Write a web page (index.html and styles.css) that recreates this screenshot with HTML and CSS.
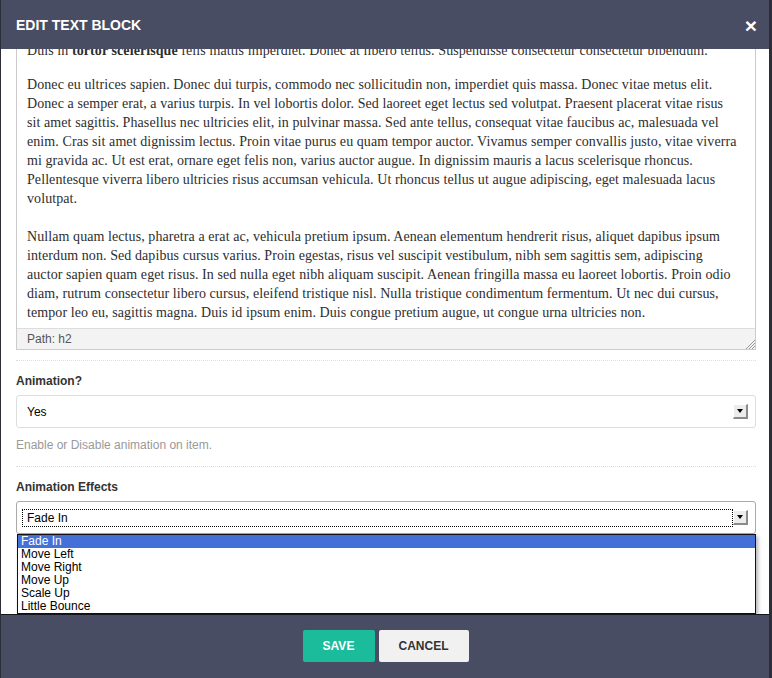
FILE: index.html
```html
<!DOCTYPE html>
<html>
<head>
<meta charset="utf-8">
<link rel="stylesheet" href="styles.css">
</head>
<body>
<div class="modal">
  <header class="modal-header">
    <h1 class="modal-title">EDIT TEXT BLOCK</h1>
    <span class="modal-close">×</span>
  </header>
  <div class="modal-body">
    <div class="editor">
      <div class="editor-content">
        <p>Duis in <b>tortor scelerisque</b> felis mattis imperdiet. Donec at libero tellus. Suspendisse consectetur consectetur bibendum.</p>
        <p>Donec eu ultrices sapien. Donec dui turpis, commodo nec sollicitudin non, imperdiet quis massa. Donec vitae metus elit.<br>Donec a semper erat, a varius turpis. In vel lobortis dolor. Sed laoreet eget lectus sed volutpat. Praesent placerat vitae risus<br>sit amet sagittis. Phasellus nec ultricies elit, in pulvinar massa. Sed ante tellus, consequat vitae faucibus ac, malesuada vel<br>enim. Cras sit amet dignissim lectus. Proin vitae purus eu quam tempor auctor. Vivamus semper convallis justo, vitae viverra<br>mi gravida ac. Ut est erat, ornare eget felis non, varius auctor augue. In dignissim mauris a lacus scelerisque rhoncus.<br>Pellentesque viverra libero ultricies risus accumsan vehicula. Ut rhoncus tellus ut augue adipiscing, eget malesuada lacus<br>volutpat.</p>
        <p>Nullam quam lectus, pharetra a erat ac, vehicula pretium ipsum. Aenean elementum hendrerit risus, aliquet dapibus ipsum<br>interdum non. Sed dapibus cursus varius. Proin egestas, risus vel suscipit vestibulum, nibh sem sagittis sem, adipiscing<br>auctor sapien quam eget risus. In sed nulla eget nibh aliquam suscipit. Aenean fringilla massa eu laoreet lobortis. Proin odio<br>diam, rutrum consectetur libero cursus, eleifend tristique nisl. Nulla tristique condimentum fermentum. Ut nec dui cursus,<br>tempor leo eu, sagittis magna. Duis id ipsum enim. Duis congue pretium augue, ut congue urna ultricies non.</p>
      </div>
      <div class="editor-path">
        <span>Path: h2</span>
        <svg class="resize" width="10" height="10" viewBox="0 0 10 10"><path d="M10 1 L1 10 M10 4 L4 10 M10 7 L7 10" stroke="#999" stroke-width="1"/></svg>
      </div>
    </div>

    <div class="sep"></div>

    <div class="field">
      <label class="field-label">Animation?</label>
      <div class="select">
        <span class="select-value">Yes</span>
        <span class="arrow-btn"></span>
      </div>
      <div class="help">Enable or Disable animation on item.</div>
    </div>

    <div class="sep"></div>

    <div class="field">
      <label class="field-label">Animation Effects</label>
      <div class="select select-open">
        <span class="select-value focus">Fade In</span>
        <span class="arrow-btn"></span>
        <ul class="dropdown">
          <li class="selected">Fade In</li>
          <li>Move Left</li>
          <li>Move Right</li>
          <li>Move Up</li>
          <li>Scale Up</li>
          <li>Little Bounce</li>
        </ul>
      </div>
    </div>
  </div>
  <footer class="modal-footer">
    <button class="btn btn-save">SAVE</button>
    <button class="btn btn-cancel">CANCEL</button>
  </footer>
</div>
</body>
</html>
```

FILE: styles.css
```css
html, body {
  margin: 0;
  padding: 0;
  background: #2c2e37;
  height: 100%;
}
body {
  font-family: "Liberation Sans", Arial, sans-serif;
  font-size: 12px;
  color: #333;
}
.modal {
  margin-left: 1px;
  width: 768px;
  height: 678px;
  background: #fff;
  display: flex;
  flex-direction: column;
  overflow: hidden;
}
.modal-header {
  height: 49px;
  flex: none;
  background: #484d63;
  display: flex;
  align-items: center;
  justify-content: space-between;
  padding: 0 12px 0 15px;
  box-sizing: border-box;
  position: relative;
  z-index: 2;
}
.modal-title {
  margin: 0;
  color: #fff;
  font-size: 14px;
  font-weight: bold;
  line-height: 16px;
  padding-top: 1px;
}
.modal-close {
  color: #fff;
  font-size: 21px;
  font-weight: bold;
  line-height: 20px;
  padding-top: 2px;
}
.modal-body {
  height: 565px;
  flex: none;
  padding: 0 13px 0 15px;
  overflow: hidden;
  position: relative;
}
.editor {
  margin-top: -8px;
  border: 1px solid #ccc;
  border-top: none;
}
.editor-content {
  padding: 0 10px 6px 10px;
  font-family: "Liberation Serif", "Times New Roman", serif;
  font-size: 14px;
  letter-spacing: 0.08px;
  line-height: 19px;
  color: #2e2e2e;
  white-space: nowrap;
}
.editor-content p {
  margin: 0 0 19px 0;
}
.editor-content p:first-child {
  margin-bottom: 15px;
}
.editor-content p:last-child {
  margin-bottom: 0;
}
.editor-path {
  height: 20px;
  border-top: 1px solid #ddd;
  background: #f3f3f3;
  display: flex;
  align-items: center;
  justify-content: space-between;
  padding-left: 10px;
  font-size: 12px;
  color: #555;
}
.resize {
  align-self: flex-end;
}
.sep {
  margin-top: 10px;
  border-top: 1px dotted #ddd;
}
.field {
  padding-top: 12px;
}
.field-label {
  display: block;
  font-weight: bold;
  font-size: 12px;
  line-height: 16px;
  color: #333;
  margin-bottom: 6px;
}
.select {
  height: 33px;
  box-sizing: border-box;
  border: 1px solid #ddd;
  border-radius: 3px;
  display: flex;
  align-items: center;
  padding: 0 6px 0 6px;
  position: relative;
  background: #fff;
}
.select-value {
  flex: 1;
  padding-left: 4px;
  font-size: 12px;
  color: #000;
  line-height: 14px;
  margin-right: 1px;
}
.select-open {
  border-color: #aaa;
}
.focus {
  outline: 1px dotted #000;
  outline-offset: 0;
  padding-top: 1px;
  padding-bottom: 1px;
}
.arrow-btn {
  width: 12px;
  height: 12px;
  background: #ececec;
  border-right: 2px solid #8a8a8a;
  border-bottom: 2px solid #8a8a8a;
  border-top: 1px solid #fff;
  border-left: 1px solid #fff;
  position: relative;
  margin-right: 1px;
}
.arrow-btn::after {
  content: "";
  position: absolute;
  left: 3px;
  top: 4px;
  border-left: 3px solid transparent;
  border-right: 3px solid transparent;
  border-top: 4px solid #000;
}
.help {
  margin-top: 8px;
  font-size: 12px;
  line-height: 16px;
  color: #999;
  margin-bottom: 13px;
  padding-top: 1px;
}
.dropdown {
  position: absolute;
  left: 0;
  right: -1px;
  top: 32px;
  margin: 0;
  padding: 0;
  list-style: none;
  border: 1px solid #111;
  background: #fff;
  box-shadow: 2px 2px 4px rgba(0, 0, 0, 0.3);
  z-index: 3;
}
.dropdown li {
  height: 13px;
  line-height: 13px;
  font-size: 12px;
  color: #000;
  padding-left: 3px;
}
.dropdown li.selected {
  background: #4570d8;
  color: #fff;
}
.modal-footer {
  flex: 1;
  background: #484d63;
  border-top: 1px solid #15161b;
  display: flex;
  justify-content: center;
  align-items: flex-start;
  gap: 4px;
  padding-top: 15px;
  padding-left: 1px;
}
.btn {
  height: 32px;
  border: none;
  border-radius: 2px;
  font-family: "Liberation Sans", Arial, sans-serif;
  font-weight: bold;
  font-size: 12px;
  padding: 0;
  cursor: pointer;
}
.btn-save {
  width: 72px;
  background: #1abc9c;
  color: #fff;
}
.btn-cancel {
  width: 90px;
  background: #f1f1f1;
  color: #333;
}
```
